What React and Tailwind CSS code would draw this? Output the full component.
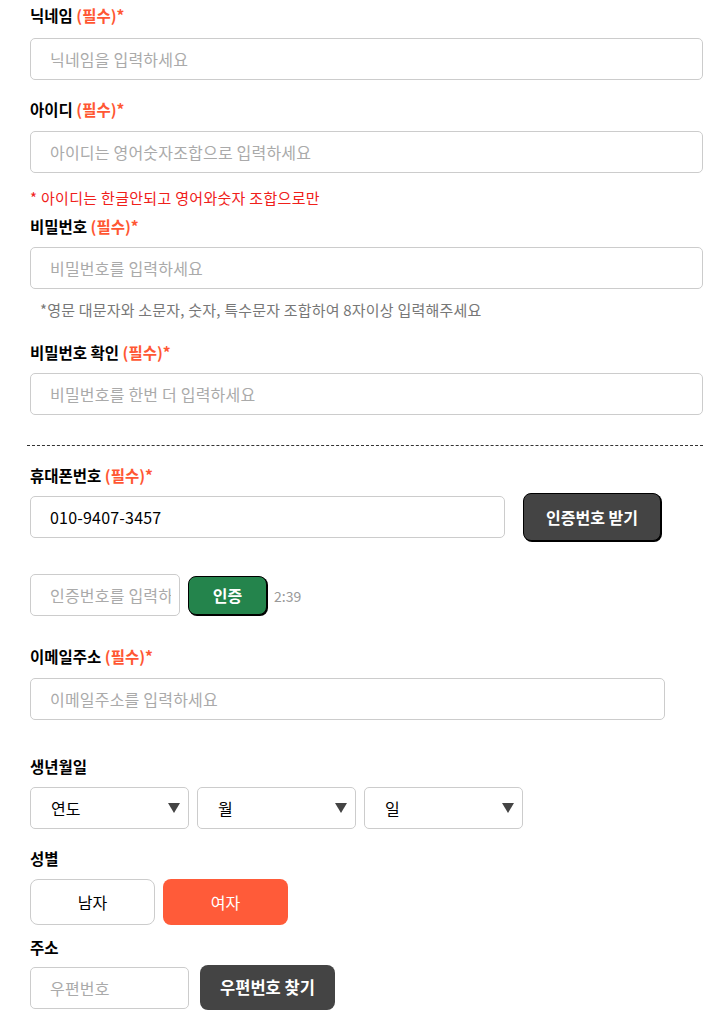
import React from "react";

const font = { fontFamily: '"Noto Sans CJK KR", "Noto Sans", sans-serif' };

function Label({ text, required, className = "" }) {
  return (
    <div className={"h-[20px] leading-[20px] text-[15.5px] font-bold text-black " + className}>
      {text}
      {required && <span className="text-[#ff5733]"> (필수)*</span>}
    </div>
  );
}

function TextInput({ placeholder, value, className = "" }) {
  return (
    <input
      readOnly
      placeholder={placeholder}
      defaultValue={value}
      className={
        "block h-[42px] rounded-[5px] border border-[#cccccc] bg-white pl-[19px] pr-2 text-[16px] tracking-[0.2px] text-black outline-none placeholder:text-[#aaaaaa] " +
        className
      }
      style={font}
    />
  );
}

function SelectBox({ text }) {
  return (
    <div className="flex h-[42px] w-[159px] items-center justify-between rounded-[5px] border border-[#cccccc] bg-white pl-[20px] pr-[7px] text-[16px] text-black">
      <span className="leading-[20px]">{text}</span>
      <svg width="14" height="12" viewBox="0 0 14 12">
        <path d="M1 1 H13 L7 11 Z" fill="#444444" />
      </svg>
    </div>
  );
}

export default function App() {
  return (
    <div className="min-h-[1016px] w-[703px] overflow-hidden bg-white" style={font}>
      <div className="pl-[30px] pt-[5px]">
        <Label text="닉네임" required />
        <TextInput placeholder="닉네임을 입력하세요" className="mt-[13px] w-[673px]" />

        <Label text="아이디" required className="mt-[19px]" />
        <TextInput placeholder="아이디는 영어숫자조합으로 입력하세요" className="mt-[12px] w-[673px]" />

        <div className="mt-[15px] h-[20px] leading-[20px] text-[15px] tracking-[0.3px] text-[#f0201a]">
          * 아이디는 한글안되고 영어와숫자 조합으로만
        </div>

        <Label text="비밀번호" required className="mt-[8px]" />
        <TextInput placeholder="비밀번호를 입력하세요" className="mt-[11px] w-[673px]" />

        <div className="mt-[11px] h-[20px] pl-[10px] leading-[20px] text-[15px] tracking-[0.2px] text-[#777777]">
          *영문 대문자와 소문자, 숫자, 특수문자 조합하여 8자이상 입력해주세요
        </div>

        <Label text="비밀번호 확인" required className="mt-[22px]" />
        <TextInput placeholder="비밀번호를 한번 더 입력하세요" className="mt-[11px] w-[673px]" />
      </div>

      <div className="ml-[27px] mt-[30px] border-t border-dashed border-[#333333]" />

      <div className="pl-[30px]">
        <Label text="휴대폰번호" required className="mt-[19px]" />
        <div className="mt-[8px] flex h-[48px] items-center">
          <TextInput value="010-9407-3457" className="w-[475px]" />
          <button className="ml-[18px] h-[48px] w-[138px] rounded-[8px] border border-black bg-[#444444] text-[16px] font-bold text-white shadow-[1px_1px_0_#000]">
            인증번호 받기
          </button>
        </div>

        <div className="mt-[33px] flex h-[42px] items-center">
          <TextInput placeholder="인증번호를 입력하세요" className="w-[150px]" />
          <button className="ml-[8px] h-[39px] w-[79px] rounded-[8px] border border-black bg-[#24844c] text-[16px] font-bold text-white shadow-[1px_1px_0_#000]">
            인증
          </button>
          <span className="ml-[7px] mt-[3px] text-[14px] text-[#999999]">2:39</span>
        </div>

        <Label text="이메일주소" required className="mt-[30px]" />
        <TextInput placeholder="이메일주소를 입력하세요" className="mt-[12px] w-[635px]" />

        <Label text="생년월일" className="mt-[36px]" />
        <div className="mt-[11px] flex gap-[8px]">
          <SelectBox text="연도" />
          <SelectBox text="월" />
          <SelectBox text="일" />
        </div>

        <Label text="성별" className="mt-[19px]" />
        <div className="mt-[11px] flex gap-[8px]">
          <button className="h-[46px] w-[125px] rounded-[8px] border border-[#cccccc] bg-white text-[16px] text-black">
            남자
          </button>
          <button className="h-[46px] w-[125px] rounded-[8px] bg-[#ff5b39] text-[16px] text-white">
            여자
          </button>
        </div>

        <Label text="주소" className="mt-[12px]" />
        <div className="mt-[8px] flex h-[45px] items-center">
          <TextInput placeholder="우편번호" className="w-[159px]" />
          <button className="ml-[11px] h-[45px] w-[135px] rounded-[8px] bg-[#444444] text-[16.5px] font-bold text-white">
            우편번호 찾기
          </button>
        </div>
      </div>
    </div>
  );
}
